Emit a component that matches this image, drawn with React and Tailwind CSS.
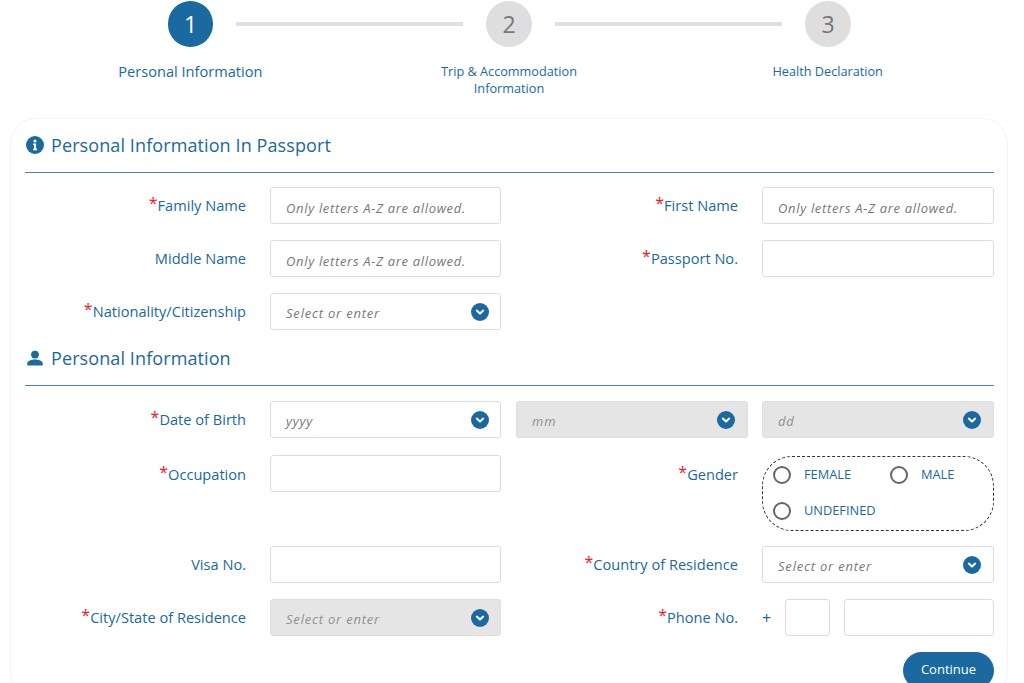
import React from "react";

const BLUE = "#1a699f";

const Chevron = () => (
  <svg width="18" height="18" viewBox="0 0 18 18" className="shrink-0">
    <circle cx="9" cy="9" r="9" fill={BLUE} />
    <path d="M5.8 7.6 9 10.6l3.2-3" fill="none" stroke="#fff" strokeWidth="2" strokeLinecap="round" strokeLinejoin="round" />
  </svg>
);

const Label = ({ text, required, className = "" }) => (
  <label className={`flex shrink-0 justify-end pb-[2px] text-[14.6px] leading-[20px] text-[#1a699f] whitespace-nowrap ${className}`}>
    {required && <span className="h-[17px] text-[16px] leading-[16px] text-[#f5141e]">*</span>}
    {text}
  </label>
);

const Input = ({ placeholder, className = "w-[232px]" }) => (
  <input
    placeholder={placeholder}
    className={`h-[37px] shrink-0 ${className} rounded-[3px] border border-[#dcdcdc] bg-white px-[15px] pt-[4px] text-[13px] italic tracking-[0.68px] outline-none placeholder:text-[#777]`}
  />
);

const Select = ({ placeholder, disabled, className = "w-[232px] pr-[12px]" }) => (
  <div
    className={`flex h-[37px] shrink-0 ${className} items-center justify-between rounded-[3px] border pl-[15px] ${
      disabled ? "border-[#dedede] bg-[#e6e5e6]" : "border-[#dcdcdc] bg-white"
    }`}
  >
    <span className={`pt-[4px] text-[13px] italic tracking-[0.8px] ${disabled ? "text-[#8f8f8f]" : "text-[#777]"}`}>{placeholder}</span>
    <Chevron />
  </div>
);

const Radio = ({ text, className = "" }) => (
  <label className={`flex items-center gap-[13px] text-[12.8px] text-[#1a699f] ${className}`}>
    <span className="h-[18px] w-[18px] rounded-full border-2 border-[#666] bg-white" />
    {text}
  </label>
);

const Row = ({ className = "", children }) => (
  <div className={`flex items-center ${className}`}>{children}</div>
);

const SectionTitle = ({ icon, text, className = "" }) => (
  <div className={`border-b border-[#1a699f]/80 ${className}`}>
    <div className="flex items-center gap-[7px]">
      {icon}
      <h2 className="text-[18px] leading-[26px] tracking-[0.1px] text-[#1a699f] font-normal">{text}</h2>
    </div>
  </div>
);

const Step = ({ n, active }) => (
  <div
    className={`flex h-[46px] shrink-0 items-center justify-center rounded-full text-[23px] ${
      active ? "w-[45px] bg-[#1a699f] text-white" : "w-[46px] bg-[#dedede] text-[#777]"
    }`}
  >
    {n}
  </div>
);

const Line = () => <div className="mx-[23px] h-[4px] flex-1 bg-[#e0e0e0]" />;

export default function App() {
  return (
    <div className="h-[683px] overflow-hidden bg-white" style={{ fontFamily: '"Open Sans", sans-serif' }}>
      {/* stepper */}
      <div className="flex items-center pl-[168px] pr-[173px] pt-[1px]">
        <Step n="1" active />
        <Line />
        <Step n="2" />
        <Line />
        <Step n="3" />
      </div>
      <div className="ml-[31px] mt-[15px] grid h-[56px] w-[956px] grid-cols-3 text-center text-[#1a699f]">
        <div className="-mt-[1px] text-[14.6px] leading-[20px]">Personal Information</div>
        <div className="pt-[1px] text-[12.7px] leading-[17px]">
          Trip &amp; Accommodation
          <br />
          Information
        </div>
        <div className="pt-[1px] text-[12.7px] leading-[17px]">Health Declaration</div>
      </div>

      {/* form card */}
      <div className="relative ml-[10px] h-[580px] w-[998px] rounded-[26px] border border-[#f3f3f3] pl-[14px] pr-[13px] pt-[13px]">
        <SectionTitle
          className="h-[41px]"
          text="Personal Information In Passport"
          icon={
            <svg width="18" height="18" viewBox="0 0 18 18" className="ml-[1px]">
              <circle cx="9" cy="9" r="9" fill={BLUE} />
              <circle cx="9" cy="4.9" r="1.5" fill="#fff" />
              <path d="M7 7.6h3.1v5.2h1v1.5H7v-1.5h1V9.1H7z" fill="#fff" />
            </svg>
          }
        />

        <Row className="mt-[14px]">
          <Label required text="Family Name" className="w-[221px]" />
          <Input className="ml-[24px] w-[231px]" placeholder="Only letters A-Z are allowed." />
          <Label required text="First Name" className="w-[237px]" />
          <Input className="ml-[24px] w-[232px]" placeholder="Only letters A-Z are allowed." />
        </Row>
        <Row className="mt-[16px]">
          <Label text="Middle Name" className="w-[221px]" />
          <Input className="ml-[24px] w-[231px]" placeholder="Only letters A-Z are allowed." />
          <Label required text="Passport No." className="w-[237px]" />
          <Input className="ml-[24px] w-[232px]" />
        </Row>
        <Row className="mt-[16px]">
          <Label required text="Nationality/Citizenship" className="w-[221px]" />
          <Select className="ml-[24px] w-[231px] pr-[11px]" placeholder="Select or enter" />
        </Row>

        <SectionTitle
          className="mt-[15px] h-[41px]"
          text="Personal Information"
          icon={
            <svg width="18" height="18" viewBox="0 0 18 18" className="ml-[1px]">
              <circle cx="9" cy="5.6" r="3.9" fill={BLUE} />
              <path d="M1.2 16.6v-1.9c0-2.9 4.6-4.2 7.8-4.2s7.8 1.3 7.8 4.2v1.9z" fill={BLUE} />
            </svg>
          }
        />

        <Row className="mt-[15px]">
          <Label required text="Date of Birth" className="w-[221px]" />
          <Select className="ml-[24px] w-[231px] pr-[11px]" placeholder="yyyy" />
          <Select disabled className="ml-[15px] w-[232px] pr-[12px]" placeholder="mm" />
          <Select disabled className="ml-[14px] w-[232px] pr-[12px]" placeholder="dd" />
        </Row>

        <div className="mt-[17px] flex items-start">
          <Label required text="Occupation" className="mt-[9px] w-[221px]" />
          <Input className="ml-[24px] w-[231px]" />
          <Label required text="Gender" className="mt-[9px] w-[237px]" />
          <div className="ml-[24px] mt-[1px] grid h-[75px] w-[232px] shrink-0 grid-cols-[117px_1fr] content-start gap-y-[17px] rounded-[30px] border border-dashed border-[#333] pl-[10px] pt-[8px]">
            <Radio text="FEMALE" />
            <Radio text="MALE" />
            <Radio text="UNDEFINED" className="col-span-2" />
          </div>
        </div>

        <Row className="mt-[15px]">
          <Label text="Visa No." className="w-[221px]" />
          <Input className="ml-[24px] w-[231px]" />
          <Label required text="Country of Residence" className="w-[237px]" />
          <Select className="ml-[24px] w-[232px] pr-[12px]" placeholder="Select or enter" />
        </Row>
        <Row className="mt-[16px]">
          <Label required text="City/State of Residence" className="w-[221px]" />
          <Select disabled className="ml-[24px] w-[231px] pr-[11px]" placeholder="Select or enter" />
          <Label required text="Phone No." className="w-[237px]" />
          <span className="ml-[24px] w-[23px] text-[16px] text-[#1a699f]">+</span>
          <Input className="w-[45px]" />
          <Input className="ml-[14px] w-[150px]" />
        </Row>

        <div className="mt-[16px] flex justify-end">
          <button className="h-[37px] w-[91px] rounded-full bg-[#1a699f] pb-[2px] text-[13px] text-white">Continue</button>
        </div>
      </div>
    </div>
  );
}
